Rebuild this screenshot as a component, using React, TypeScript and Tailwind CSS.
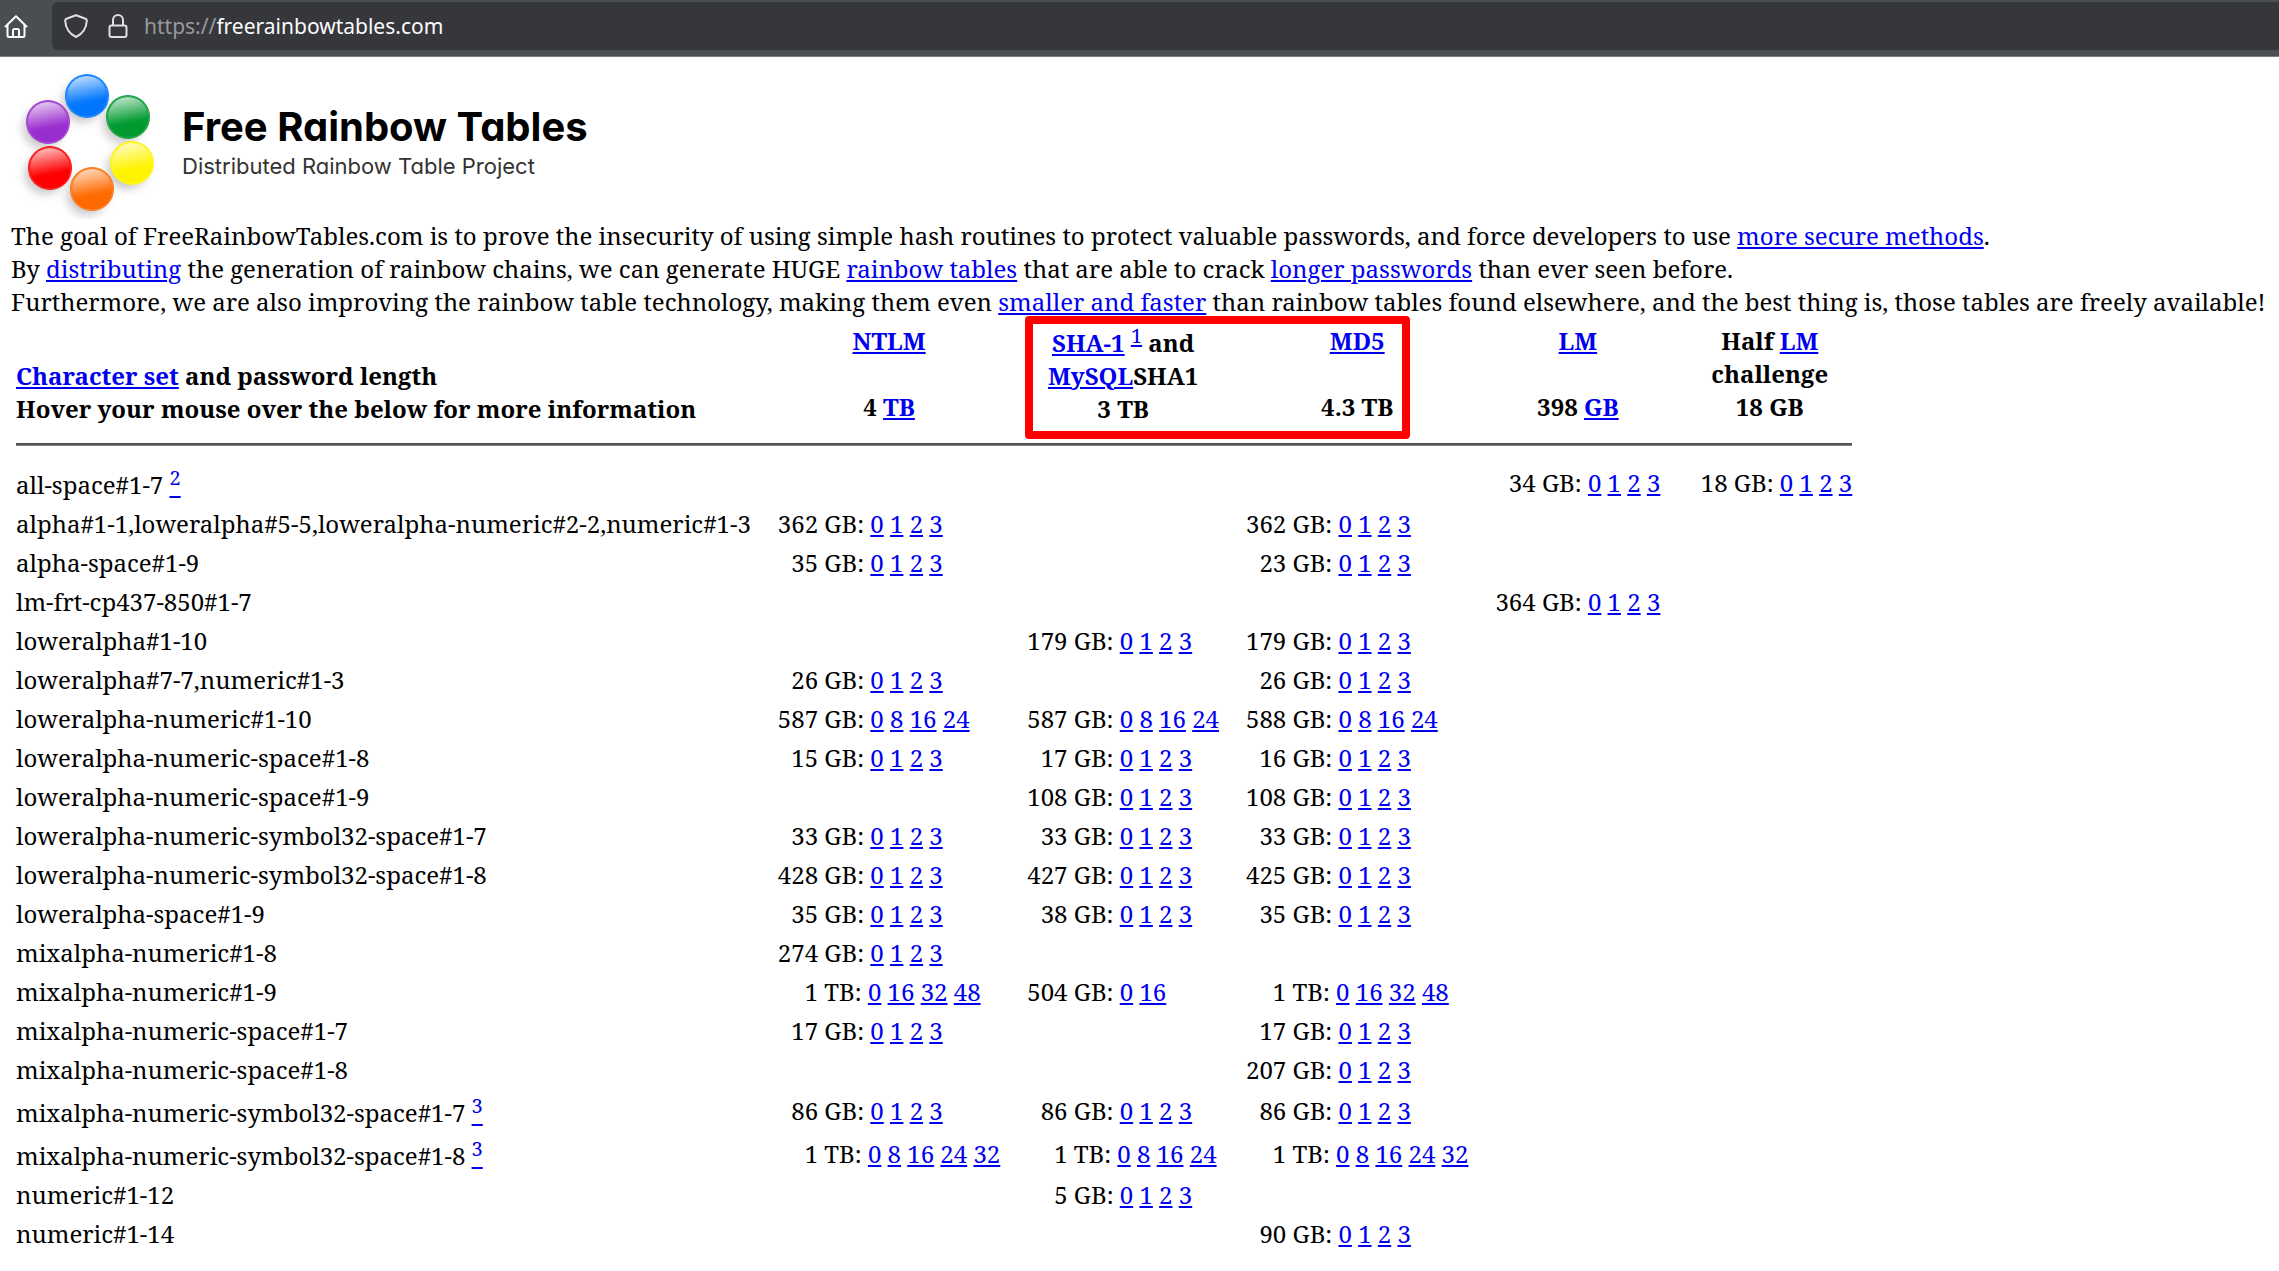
import type { ReactNode } from "react";

type Download = { size: string; parts: string } | null;
type Row = { name: string; note?: string; cells: Download[] };

const d = (size: string, parts = "0 1 2 3"): Download => ({ size, parts });

const rows: Row[] = [
  { name: "all-space#1-7", note: "2", cells: [null, null, null, d("34 GB"), d("18 GB")] },
  { name: "alpha#1-1,loweralpha#5-5,loweralpha-numeric#2-2,numeric#1-3", cells: [d("362 GB"), null, d("362 GB"), null, null] },
  { name: "alpha-space#1-9", cells: [d("35 GB"), null, d("23 GB"), null, null] },
  { name: "lm-frt-cp437-850#1-7", cells: [null, null, null, d("364 GB"), null] },
  { name: "loweralpha#1-10", cells: [null, d("179 GB"), d("179 GB"), null, null] },
  { name: "loweralpha#7-7,numeric#1-3", cells: [d("26 GB"), null, d("26 GB"), null, null] },
  { name: "loweralpha-numeric#1-10", cells: [d("587 GB", "0 8 16 24"), d("587 GB", "0 8 16 24"), d("588 GB", "0 8 16 24"), null, null] },
  { name: "loweralpha-numeric-space#1-8", cells: [d("15 GB"), d("17 GB"), d("16 GB"), null, null] },
  { name: "loweralpha-numeric-space#1-9", cells: [null, d("108 GB"), d("108 GB"), null, null] },
  { name: "loweralpha-numeric-symbol32-space#1-7", cells: [d("33 GB"), d("33 GB"), d("33 GB"), null, null] },
  { name: "loweralpha-numeric-symbol32-space#1-8", cells: [d("428 GB"), d("427 GB"), d("425 GB"), null, null] },
  { name: "loweralpha-space#1-9", cells: [d("35 GB"), d("38 GB"), d("35 GB"), null, null] },
  { name: "mixalpha-numeric#1-8", cells: [d("274 GB"), null, null, null, null] },
  { name: "mixalpha-numeric#1-9", cells: [d("1 TB", "0 16 32 48"), d("504 GB", "0 16"), d("1 TB", "0 16 32 48"), null, null] },
  { name: "mixalpha-numeric-space#1-7", cells: [d("17 GB"), null, d("17 GB"), null, null] },
  { name: "mixalpha-numeric-space#1-8", cells: [null, null, d("207 GB"), null, null] },
  { name: "mixalpha-numeric-symbol32-space#1-7", note: "3", cells: [d("86 GB"), d("86 GB"), d("86 GB"), null, null] },
  { name: "mixalpha-numeric-symbol32-space#1-8", note: "3", cells: [d("1 TB", "0 8 16 24 32"), d("1 TB", "0 8 16 24"), d("1 TB", "0 8 16 24 32"), null, null] },
  { name: "numeric#1-12", cells: [null, d("5 GB"), null, null, null] },
  { name: "numeric#1-14", cells: [null, null, d("90 GB"), null, null] },
];

function Link({ children }: { children: ReactNode }) {
  return (
    <a href="#" className="text-[#0000ee] underline decoration-2 underline-offset-2">
      {children}
    </a>
  );
}

function Sup({ children }: { children: ReactNode }) {
  return <sup className="static align-super text-[20px] leading-[27px] font-normal">{children}</sup>;
}

function DownloadCell({ item }: { item: Download }) {
  if (!item) return <td className="p-px pl-[22px]" />;
  // Figure spaces keep the units digit of every size in one column.
  const pad = "\u2007".repeat(3 - item.size.indexOf(" "));
  return (
    <td className="p-px pl-[22px] align-middle whitespace-nowrap">
      {pad}
      {item.size}:
      {item.parts.split(" ").map((part) => (
        <span key={part}>
          {" "}
          <Link>{part}</Link>
        </span>
      ))}
    </td>
  );
}

function BrowserBar() {
  return (
    <header className="flex h-[57px] items-start border-b border-[#807d82] bg-[#4a4d52] pt-0.5 pl-1">
      <button type="button" aria-label="Home" className="mt-3 h-6 w-6 shrink-0">
        <svg viewBox="0 0 24 24" className="h-6 w-6" fill="none" stroke="#fbfbfe" strokeWidth="2" strokeLinejoin="round" strokeLinecap="round">
          <path d="M1.5 12.5 12 2.2l10.500 10.300" />
          <path d="M3.500 11v10.500a1.500 1.500 0 0 0 1.500 1.500h14a1.500 1.500 0 0 0 1.500-1.500V11" />
          <path d="M9 22.500V16.500a1.500 1.500 0 0 1 1.500-1.500h3a1.500 1.500 0 0 1 1.500 1.500v6" />
        </svg>
      </button>
      <div className="ml-6 flex h-12 flex-1 items-center rounded-l-md bg-[#36373a] pl-3">
        <svg viewBox="0 0 24 24" className="h-6 w-6 shrink-0" fill="none" stroke="#e0e0e2" strokeWidth="2" strokeLinejoin="round">
          <path d="M12 1.200 21.500 4.800c.9.300 1.400 1 1.300 2-.4 7-4 13-10.800 16.200C5.200 19.800 1.600 13.800 1.200 6.800c-.1-1 .4-1.700 1.300-2Z" />
        </svg>
        <svg viewBox="0 0 20 24" className="ml-5 h-6 w-5 shrink-0" fill="none" stroke="#e0e0e2" strokeWidth="2">
          <rect x="1.500" y="11.500" width="17" height="11.500" rx="2" />
          <path d="M5 11.500V6a5 5 0 0 1 10 0v5.500" />
        </svg>
        <div className="ml-4 flex-1 font-['Noto_Sans'] text-[21px] leading-[30px] text-[#fbfbfe]">
          <span className="text-[#9a9a9d]">https://</span>freerainbowtables.com
        </div>
      </div>
    </header>
  );
}

const balls = [
  { id: "orange", x: 81, y: 120, color: "#ff6a00" },
  { id: "yellow", x: 121, y: 94, color: "#fff400" },
  { id: "red", x: 39, y: 99, color: "#fe0000" },
  { id: "green", x: 117, y: 48, color: "#009a30" },
  { id: "purple", x: 37, y: 53, color: "#9a2dcd" },
  { id: "blue", x: 76, y: 27, color: "#0076ff" },
];

function Logo() {
  return (
    <a href="#" className="flex h-[150px] w-fit">
      <svg viewBox="0 0 150 150" className="h-[150px] w-[150px] shrink-0" role="img" aria-label="Free Rainbow Tables logo">
        <defs>
          <linearGradient id="gloss" x1="0.35" y1="0" x2="0.55" y2="1">
            <stop offset="0.02" stopColor="#fff" stopOpacity="0.72" />
            <stop offset="0.62" stopColor="#fff" stopOpacity="0.04" />
            <stop offset="0.7" stopColor="#fff" stopOpacity="0" />
          </linearGradient>
          <filter id="soft" x="-50%" y="-50%" width="200%" height="200%">
            <feGaussianBlur stdDeviation="5" />
          </filter>
        </defs>
        {balls.map((b) => (
          <circle key={b.id} cx={b.x - 5} cy={b.y + 6} r="20" fill="#000" fillOpacity="0.22" filter="url(#soft)" />
        ))}
        {balls.map((b) => (
          <g key={b.id}>
            <circle cx={b.x} cy={b.y} r="22" fill={b.color} />
            <circle cx={b.x} cy={b.y} r="20" fill="url(#gloss)" />
            <circle cx={b.x} cy={b.y} r="21" fill="none" stroke="#fff" strokeOpacity="0.2" strokeWidth="1" />
          </g>
        ))}
      </svg>
      <div className="ml-[21px] flex flex-col pt-[33px] font-['Inter'] text-black [font-feature-settings:'cv11']">
        <span className="text-[40px] leading-[50px] font-bold">Free Rainbow Tables</span>
        <span className="text-[22px] leading-[28px] text-[#333]">Distributed Rainbow Table Project</span>
      </div>
    </a>
  );
}

const headCell = "p-px pl-[22px] text-center align-middle font-bold whitespace-nowrap";

export default function App() {
  return (
    <div className="bg-white font-['Noto_Serif',serif] text-[24px] leading-[33px] text-black">
      <BrowserBar />
      <main className="px-[11px] pt-3">
        <Logo />
        <p>
          The goal of FreeRainbowTables.com is to prove the insecurity of using simple hash routines to protect valuable
          passwords, and force developers to use <Link>more secure methods</Link>.<br />
          By <Link>distributing</Link> the generation of rainbow chains, we can generate HUGE <Link>rainbow tables</Link>{" "}
          that are able to crack <Link>longer passwords</Link> than ever seen before.
          <br />
          Furthermore, we are also improving the rainbow table technology, making them even{" "}
          <Link>smaller and faster</Link> than rainbow tables found elsewhere, and the best thing is, those tables are
          freely available!
        </p>
        <table className="-mt-px border-separate border-spacing-1">
          <thead>
            <tr>
              <th className="p-px text-left align-bottom font-bold whitespace-nowrap">
                <Link>Character set</Link> and password length
                <br />
                Hover your mouse over the below for more information
              </th>
              <th className={headCell}>
                <Link>NTLM</Link>
                <br />
                <br />4 <Link>TB</Link>
              </th>
              <th className={`relative ${headCell}`}>
                <Link>SHA-1</Link>{" "}
                <Sup>
                  <Link>1</Link>
                </Sup>{" "}
                and
                <br />
                <Link>MySQL</Link>SHA1
                <br />3 TB
                <span className="pointer-events-none absolute -top-[5px] left-5 h-[123px] w-[385px] rounded border-8 border-[#fe0000]" />
              </th>
              <th className={headCell}>
                <Link>MD5</Link>
                <br />
                <br />
                4.3 TB
              </th>
              <th className={headCell}>
                <Link>LM</Link>
                <br />
                <br />
                398 <Link>GB</Link>
              </th>
              <th className={headCell}>
                Half <Link>LM</Link>
                <br />
                challenge
                <br />
                18 GB
              </th>
            </tr>
            <tr>
              <td colSpan={6} className="p-px">
                <hr className="my-3 h-[3px] border-0 border-t-2 border-[#555252] bg-[#858282]" />
              </td>
            </tr>
          </thead>
          <tbody>
            {rows.map((row) => (
              <tr key={row.name}>
                <td className="p-px align-middle whitespace-nowrap">
                  {row.name}
                  {row.note && (
                    <>
                      {" "}
                      <Link>
                        <Sup>{row.note}</Sup>
                      </Link>
                    </>
                  )}
                </td>
                {row.cells.map((item, i) => (
                  <DownloadCell key={i} item={item} />
                ))}
              </tr>
            ))}
          </tbody>
        </table>
      </main>
    </div>
  );
}
